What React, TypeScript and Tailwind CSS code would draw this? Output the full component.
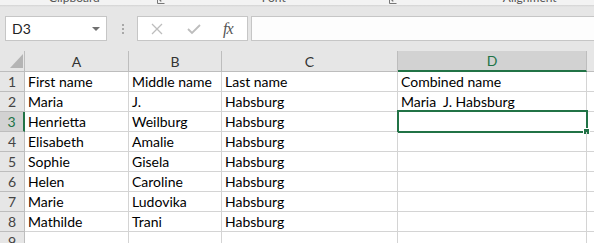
import React from "react"

const cols = ["A", "B", "C", "D"]
const rows: string[][] = [
    ["First name", "Middle name", "Last name", "Combined name"],
    ["Maria", "J.", "Habsburg", "Maria  J. Habsburg"],
    ["Henrietta", "Weilburg", "Habsburg", ""],
    ["Elisabeth", "Amalie", "Habsburg", ""],
    ["Sophie", "Gisela", "Habsburg", ""],
    ["Helen", "Caroline", "Habsburg", ""],
    ["Marie", "Ludovika", "Habsburg", ""],
    ["Mathilde", "Trani", "Habsburg", ""],
    ["", "", "", ""],
]

function Launcher() {
    return (
        <svg width="8" height="8" viewBox="0 0 8 8" className="block">
            <path d="M0.5 0.5 V7.5 H7.5" fill="none" stroke="#777" />
            <path d="M3 5 L7 1 M4.5 5 H3 V3.5" fill="none" stroke="#777" />
        </svg>
    )
}

export default function App() {
    return (
        <div className="w-[594px] h-[243px] overflow-hidden bg-[#e6e6e6] font-['Lato','Open_Sans',sans-serif] select-none">
            {/* ribbon group labels, mostly scrolled off */}
            <div className="h-[5px] overflow-hidden bg-[#f3f3f3] relative text-[12px] leading-[12px] text-[#555]">
                <div className="flex items-start -mt-[8px]">
                    <span className="ml-[49px]">Clipboard</span>
                    <span className="ml-[57px] mt-[4px]"><Launcher /></span>
                    <span className="ml-[97px]">Font</span>
                    <span className="ml-[103px] mt-[4px]"><Launcher /></span>
                    <span className="ml-[106px]">Alignment</span>
                </div>
            </div>
            <div className="h-[2px] bg-gradient-to-b from-[#d4d4d4] to-[#e6e6e6]" />

            {/* formula bar */}
            <div className="flex items-center h-[25px] mt-[9px]">
                <div className="ml-[5px] w-[102px] h-[25px] bg-white border border-[#c6c6c6] flex items-center justify-between pl-[6px] pr-[6px]">
                    <span className="text-[14px] text-[#222]">D3</span>
                    <svg width="8" height="4" viewBox="0 0 8 4"><path d="M0 0 H8 L4 4 Z" fill="#707070" /></svg>
                </div>
                <div className="ml-[15px] flex flex-col gap-[2px]">
                    <span className="w-[2px] h-[2px] bg-[#a8a8a8]" />
                    <span className="w-[2px] h-[2px] bg-[#a8a8a8]" />
                    <span className="w-[2px] h-[2px] bg-[#a8a8a8]" />
                </div>
                <div className="ml-[13px] w-[111px] h-[25px] bg-white border border-[#c6c6c6] flex items-center">
                    <svg width="12" height="12" viewBox="0 0 12 12" className="ml-[13px]">
                        <path d="M1 1 L11 11 M11 1 L1 11" stroke="#bdbdbd" strokeWidth="1.3" />
                    </svg>
                    <svg width="14" height="12" viewBox="0 0 14 12" className="ml-[24px]">
                        <path d="M1 6 L5 10 L13 2" fill="none" stroke="#bdbdbd" strokeWidth="1.8" />
                    </svg>
                    <span className="ml-[22px] font-['Liberation_Serif',serif] italic text-[16px] text-[#555] tracking-[-1px]">fx</span>
                </div>
                <div className="ml-[3px] flex-1 h-[25px] bg-[#fdfdfd] border border-[#c6c6c6] border-r-0" />
            </div>

            {/* grid */}
            <div className="mt-[10px] grid grid-cols-[25px_104px_93px_176px_189px_1fr] bg-white">
                {/* header row */}
                <div className="h-[21px] bg-[#e6e6e6] border-r border-b border-[#bdbdbd] relative">
                    <svg width="13" height="14" viewBox="0 0 13 14" className="absolute left-[10px] top-[3px]">
                        <path d="M13 0 V14 H0 Z" fill="#b4b4b4" />
                    </svg>
                </div>
                {cols.map((c) => {
                    const active = c === "D"
                    return (
                        <div
                            key={c}
                            className={
                                active
                                    ? "h-[21px] bg-[#d2d2d2] border-r border-[#bdbdbd] border-b-2 border-b-[#217346] flex items-center justify-center text-[14px] text-[#217346]"
                                    : "h-[21px] bg-[#e6e6e6] border-r border-b border-[#bdbdbd] flex items-center justify-center text-[14px] text-[#333]"
                            }
                        >
                            {c}
                        </div>
                    )
                })}
                <div className="h-[21px] bg-[#e6e6e6] border-b border-[#bdbdbd]" />

                {rows.map((r, i) => {
                    const n = i + 1
                    const active = n === 3
                    return (
                        <React.Fragment key={n}>
                            <div
                                className={
                                    active
                                        ? "h-[20px] bg-[#d2d2d2] border-r-2 border-r-[#217346] border-b border-b-[#bdbdbd] flex items-end justify-center text-[14px] leading-[18px] text-[#217346]"
                                        : "h-[20px] bg-[#e6e6e6] border-r border-b border-[#bdbdbd] flex items-end justify-center text-[14px] leading-[18px] text-[#444]"
                                }
                            >
                                {n}
                            </div>
                            {r.map((v, j) => (
                                <div
                                    key={j}
                                    className="h-[20px] border-r border-b border-[#d4d4d4] pl-[3px] text-[14px] leading-[20px] text-black whitespace-pre overflow-visible relative"
                                >
                                    {v}
                                    {active && j === 3 && (
                                        <div className="absolute -left-[1px] -top-[2px] -right-[2px] -bottom-[2px] border-2 border-[#217346] pointer-events-none">
                                            <div className="absolute -right-[4px] -bottom-[4px] w-[7px] h-[7px] bg-[#217346] border border-white" />
                                        </div>
                                    )}
                                </div>
                            ))}
                            <div className="h-[20px] border-b border-[#d4d4d4]" />
                        </React.Fragment>
                    )
                })}
            </div>
        </div>
    )
}
